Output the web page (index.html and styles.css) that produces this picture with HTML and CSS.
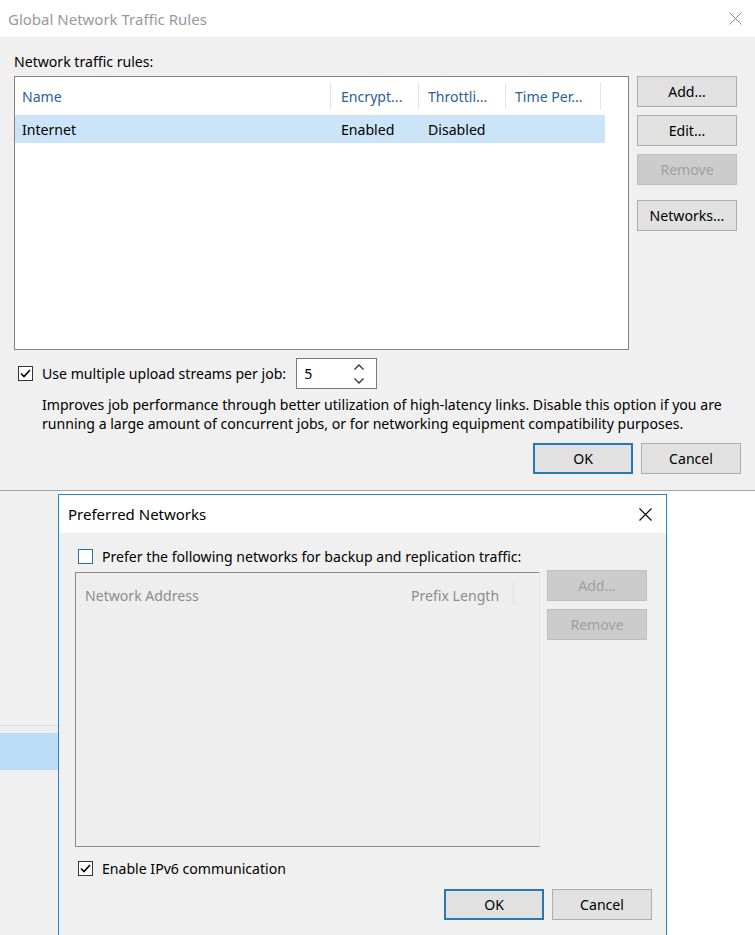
FILE: index.html
```html
<!DOCTYPE html>
<html>
<head>
<meta charset="utf-8">
<link rel="stylesheet" href="styles.css">
</head>
<body>
<div class="screen">
  <section class="win-top">
    <header class="titlebar">
      <span class="title inactive">Global Network Traffic Rules</span>
      <svg class="close" width="13" height="13" viewBox="0 0 13 13"><path d="M0.5 0.5 L12.5 12.5 M12.5 0.5 L0.5 12.5" stroke="#8a8a8a" stroke-width="1"/></svg>
    </header>
    <div class="top-body">
      <div class="label">Network traffic rules:</div>
      <div class="main-row">
        <div class="listbox">
          <div class="lv-head">
            <div class="col c1">Name</div>
            <div class="col c2 sep">Encrypt...</div>
            <div class="col c3 sep">Throttli...</div>
            <div class="col c4 sep sep-r">Time Per...</div>
          </div>
          <div class="lv-row selected">
            <div class="col c1">Internet</div>
            <div class="col c2">Enabled</div>
            <div class="col c3">Disabled</div>
            <div class="col c4"></div>
          </div>
        </div>
        <div class="btn-col">
          <button class="btn">Add...</button>
          <button class="btn">Edit...</button>
          <button class="btn disabled">Remove</button>
          <button class="btn gap-top">Networks...</button>
        </div>
      </div>
      <div class="opt-row">
        <span class="cbox checked"><svg width="11" height="9" viewBox="0 0 11 9"><path d="M1 4.5 L4 7.5 L10 1" fill="none" stroke="#000" stroke-width="1.6"/></svg></span>
        <span class="opt-label">Use multiple upload streams per job:</span>
        <div class="spinner">
          <span class="spin-val">5</span>
          <svg class="spin-arrows" width="12" height="22" viewBox="0 0 12 22"><path d="M1.5 6.5 L6 2 L10.5 6.5 M1.5 15.5 L6 20 L10.5 15.5" fill="none" stroke="#333" stroke-width="1.3"/></svg>
        </div>
      </div>
      <p class="desc">Improves job performance through better utilization of high-latency links. Disable this option if you are running a large amount of concurrent jobs, or for networking equipment compatibility purposes.</p>
      <div class="footer">
        <button class="btn default">OK</button>
        <button class="btn">Cancel</button>
      </div>
    </div>
  </section>

  <section class="lower">
    <div class="bg-strip">
      <div class="bg-line"></div>
      <div class="bg-sel"></div>
    </div>
    <div class="dialog">
      <header class="titlebar dlg-title">
        <span class="title">Preferred Networks</span>
        <svg class="close" width="13" height="13" viewBox="0 0 13 13"><path d="M0.5 0.5 L12.5 12.5 M12.5 0.5 L0.5 12.5" stroke="#000" stroke-width="1.1"/></svg>
      </header>
      <div class="dlg-body">
        <div class="cb-row first">
          <span class="cbox focus"></span>
          <span class="opt-label">Prefer the following networks for backup and replication traffic:</span>
        </div>
        <div class="dlg-main">
          <div class="listbox disabled-list">
            <div class="lv-head dis">
              <div class="col d1">Network Address</div>
              <div class="col d2">Prefix Length</div>
              <div class="col d3 sep"></div>
            </div>
          </div>
          <div class="btn-col dlg-btns">
            <button class="btn disabled">Add...</button>
            <button class="btn disabled">Remove</button>
          </div>
        </div>
        <div class="cb-row second">
          <span class="cbox checked"><svg width="11" height="9" viewBox="0 0 11 9"><path d="M1 4.5 L4 7.5 L10 1" fill="none" stroke="#000" stroke-width="1.6"/></svg></span>
          <span class="opt-label">Enable IPv6 communication</span>
        </div>
        <div class="footer dlg-footer">
          <button class="btn default">OK</button>
          <button class="btn">Cancel</button>
        </div>
      </div>
    </div>
    <div class="bg-right"></div>
  </section>
</div>
</body>
</html>
```

FILE: styles.css
```css
* { box-sizing: border-box; }
html, body { margin: 0; padding: 0; }
body {
  width: 755px;
  height: 935px;
  overflow: hidden;
  font-family: "Noto Sans", "Open Sans", sans-serif;
  font-size: 14.1px;
  color: #000;
  background: #fff;
}
.screen { display: flex; flex-direction: column; height: 935px; }

/* ---------- top window ---------- */
.win-top {
  height: 491px;
  background: #f0f0f0;
  border-bottom: 1px solid #a3a3a3;
  flex: none;
}
.titlebar {
  height: 37px;
  background: #fff;
  display: flex;
  align-items: center;
  justify-content: space-between;
  padding: 0 13px 0 8px;
}
.title { font-size: 15px; line-height: 20px; }
.title.inactive { color: #999; }
.close { display: block; }

.top-body { padding: 0 14px; }
.label { margin-top: 15px; line-height: 20px; height: 20px; }
.main-row { display: flex; gap: 8px; margin-top: 4px; }

.listbox {
  width: 615px;
  height: 274px;
  background: #fff;
  border: 1px solid #828282;
}
.lv-head, .lv-row { display: flex; }
.lv-head { height: 38px; align-items: center; color: #2d5f9a; }
.lv-row { height: 28px; align-items: center; width: 590px; padding-top: 1px; }
.lv-row.selected { background: #cce4f7; }
.col { white-space: nowrap; line-height: 20px; }
.c1 { width: 315px; padding-left: 7px; }
.c2 { width: 88px; padding-left: 10px; }
.c3 { width: 87px; padding-left: 9px; }
.c4 { width: 96px; padding-left: 9px; }
.lv-row .c2 { padding-left: 11px; }
.lv-row .c3 { padding-left: 10px; }
.lv-head .col { height: 26px; line-height: 28px; }
.sep { border-left: 1px solid #e5e5e5; }
.sep-r { border-right: 1px solid #e5e5e5; }

.btn-col { display: flex; flex-direction: column; gap: 8px; width: 100px; }
.btn {
  font-family: inherit;
  font-size: 14.1px;
  color: #000;
  width: 100px;
  height: 31px;
  background: #e1e1e1;
  border: 1px solid #adadad;
  padding: 1px 0 0;
  margin: 0;
  line-height: 20px;
}
.btn.disabled { background: #cccccc; border-color: #bfbfbf; color: #a0a0a0; }
.btn.default { border: 2px solid #2a78b3; }
.btn.gap-top { margin-top: 7px; }

.opt-row { display: flex; align-items: center; margin-top: 8px; height: 31px; padding-left: 4px; }
.cbox {
  width: 15px;
  height: 15px;
  border: 1px solid #333;
  background: #fff;
  display: inline-flex;
  align-items: center;
  justify-content: center;
  flex: none;
}
.cbox.focus { border-color: #2470a6; }
.opt-label { margin-left: 9px; line-height: 20px; white-space: nowrap; padding-top: 1px; }
.spinner {
  margin-left: 10px;
  width: 81px;
  height: 31px;
  border: 1px solid #7a7a7a;
  background: #fff;
  display: flex;
  align-items: center;
  justify-content: space-between;
  padding: 0 11px 0 7px;
}
.spin-val { line-height: 20px; padding-top: 1px; }
.spin-arrows { display: block; }

.desc { margin: 6px 0 0 28px; line-height: 19px; }
.footer { display: flex; justify-content: flex-end; gap: 8px; margin-top: 10px; }

/* ---------- lower background window + dialog ---------- */
.lower { flex: 1; display: flex; min-height: 0; background: #fff; }
.bg-strip { width: 58px; flex: none; background: #f0f0f0; padding-top: 234px; }
.bg-line { height: 1px; background: #d9d9d9; }
.bg-sel { height: 37px; margin-top: 7px; background: #bddcf8; }
.bg-right { flex: 1; background: #fff; }

.dialog {
  width: 609px;
  flex: none;
  margin-top: 3px;
  border: 1px solid #2a85c8;
  border-bottom: none;
  background: #f0f0f0;
  height: 445px;
}
.dlg-title { height: 38px; padding: 0 14px 0 9px; }
.dlg-title .title { margin-top: -1px; }
.dlg-body { padding: 0 14px 0 16px; }
.cb-row { display: flex; align-items: center; height: 20px; padding-left: 3px; }
.cb-row.first { margin-top: 13px; }
.cb-row.second { margin-top: 11px; }
.dlg-main { display: flex; gap: 7px; margin-top: 6px; align-items: flex-start; }
.disabled-list {
  width: 465px;
  height: 275px;
  background: #eeeeee;
  border: 1px solid #8a8a8a;
  border-right-color: #e4e4e4;
}
.lv-head.dis { color: #8c8c8c; height: 42px; }
.lv-head.dis .col { line-height: 30px; }
.d1 { width: 326px; padding-left: 9px; }
.d2 { width: 111px; padding-left: 9px; }
.d3 { width: 10px; height: 24px !important; border-left-color: #e0e0e0; }
.dlg-btns { margin-top: -2px; }
.dlg-footer { margin-top: 11px; }
```
